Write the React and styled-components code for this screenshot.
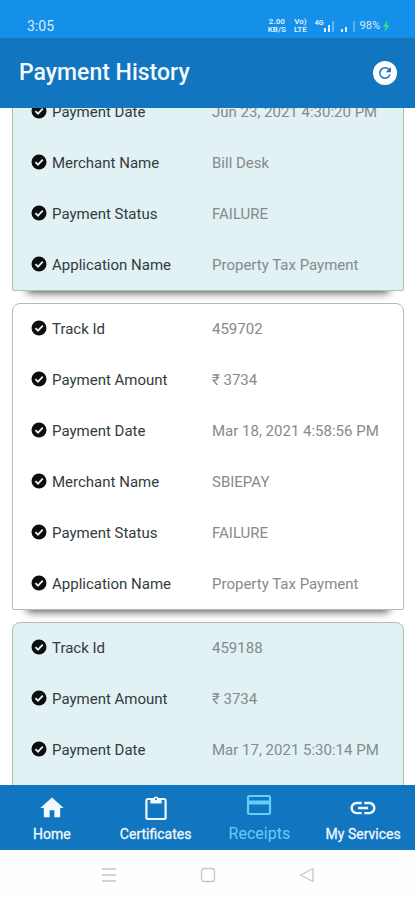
import React, {useLayoutEffect, useRef} from 'react'
import styled, {createGlobalStyle, css} from 'styled-components'
import {MdHome, MdLink} from 'react-icons/md'

const GlobalStyle = createGlobalStyle`
  * {
    box-sizing: border-box;
  }

  body {
    margin: 0;
    background: #fff;
    font-family: Roboto, "Noto Sans", sans-serif;
  }

  button {
    font-family: inherit;
    border: 0;
    padding: 0;
    background: none;
  }
`

const Screen = styled.div`
  display: flex;
  flex-direction: column;
  height: 100vh;
`

const StatusBar = styled.div`
  display: flex;
  align-items: center;
  justify-content: space-between;
  flex: none;
  height: 38px;
  padding: 14px 25px 0 27px;
  background: #1590ea;
  color: #d8edfc;
`

const Time = styled.div`
  font-size: 14px;
  line-height: 20px;
`

const Indicators = styled.div`
  display: flex;
  align-items: center;
`

const Stacked = styled.div`
  display: flex;
  flex-direction: column;
  align-items: center;
  margin-right: 8px;
  font-size: 8px;
  font-weight: 700;
  line-height: 8px;
`

const Network = styled.div`
  display: flex;
  align-items: flex-start;
  margin-right: 4px;
  font-size: 7px;
  font-weight: 700;
  line-height: 8px;
`

const Signal = styled.svg`
  display: block;
  margin-right: 4px;
`

const Battery = styled.div`
  margin-right: 2px;
  font-size: 11px;
  line-height: 20px;
`

const Header = styled.header`
  display: flex;
  align-items: center;
  justify-content: space-between;
  flex: none;
  height: 70px;
  padding: 0 18px 0 19px;
  background: #1176bf;
`

const Title = styled.h1`
  margin: 0;
  color: #f3f9fd;
  font-size: 23px;
  font-weight: 500;
  line-height: 30px;
`

const RefreshButton = styled.button`
  display: flex;
  align-items: center;
  justify-content: center;
  width: 24px;
  height: 24px;
  border-radius: 50%;
  background: #fff;
  color: #1176bf;
`

const PaymentList = styled.main`
  flex: 1;
  min-height: 0;
  padding: 12px 11px 12px 12px;
  overflow-y: auto;
  scrollbar-width: none;
`

const Card = styled.dl`
  display: flex;
  flex-direction: column;
  gap: 31px;
  margin: 0 0 12px;
  padding: 15px 18px;
  border: 1px solid #b3bbbb;
  border-radius: 8px 8px 2px 2px;
  background: ${props => props.$tinted ? '#e1f1f4' : '#fff'};
  box-shadow: 0 17px 8px -15px rgba(0, 0, 0, 0.65);
`

const Row = styled.div`
  display: flex;
  font-size: 15px;
  line-height: 20px;
`

const Label = styled.dt`
  display: flex;
  flex: 0 0 181px;
  gap: 5px;
  color: #333b3d;
`

const Value = styled.dd`
  margin: 0;
  color: #858b8c;
  white-space: nowrap;
`

const CheckIcon = styled.svg`
  flex: none;
  width: 16px;
  height: 18px;
`

const TabBar = styled.nav`
  display: grid;
  grid-template-columns: repeat(4, 1fr);
  flex: none;
  height: 65px;
  background: #1176bf;
`

const Tab = styled.button`
  display: flex;
  flex-direction: column;
  align-items: center;
  justify-content: center;
  gap: 1px;
  color: #f0f8fd;
  font-size: 14px;
  line-height: 20px;
  -webkit-text-stroke: 0.3px currentColor;

  ${props => props.$active && css`
    color: #63cffa;
    font-size: 16px;
    -webkit-text-stroke: 0;
  `}
`

const TabIcon = styled.span`
  display: flex;
  align-items: center;
  justify-content: center;
  height: 32px;
  padding: ${props => props.$active ? '0 0 4px' : '2px 0 0'};
`

const SystemBar = styled.div`
  display: flex;
  align-items: center;
  justify-content: center;
  gap: 83px;
  flex: none;
  height: 50px;
  background: #fefefe;
`

const SystemButton = styled.button`
  display: flex;
  width: 16px;
  height: 16px;
  color: #c6c6c6;
`

const payments = [
  {
    date: 'Jun 23, 2021 4:30:20 PM',
    merchant: 'Bill Desk',
    status: 'FAILURE',
    application: 'Property Tax Payment',
  },
  {
    trackId: '459702',
    amount: '₹ 3734',
    date: 'Mar 18, 2021 4:58:56 PM',
    merchant: 'SBIEPAY',
    status: 'FAILURE',
    application: 'Property Tax Payment',
  },
  {
    trackId: '459188',
    amount: '₹ 3734',
    date: 'Mar 17, 2021 5:30:14 PM',
    merchant: 'SBIEPAY',
    status: 'FAILURE',
    application: 'Property Tax Payment',
  },
]

const fields = [
  ['trackId', 'Track Id'],
  ['amount', 'Payment Amount'],
  ['date', 'Payment Date'],
  ['merchant', 'Merchant Name'],
  ['status', 'Payment Status'],
  ['application', 'Application Name'],
]

const Check = () => (
  <CheckIcon viewBox="0 0 16 18" aria-hidden="true">
    <circle cx="8" cy="9" r="7.5" fill="#0b0d0e" />
    <path d="M4.4 9.2l2.6 2.5 4.8-5" fill="none" stroke="#e9f1f2" strokeWidth="1.8" />
  </CheckIcon>
)

const RefreshIcon = () => (
  <svg width="14" height="14" viewBox="0 0 14 14" fill="none" aria-hidden="true">
    <path d="M11.4 4.2A5.2 5.2 0 1 0 12 8.4" stroke="currentColor" strokeWidth="1.5" />
    <path d="M12.9 1v5.2H7.7z" fill="currentColor" />
  </svg>
)

const ClipboardIcon = () => (
  <svg width="22" height="26" viewBox="0 0 22 26" fill="none" aria-hidden="true">
    <rect x="1.4" y="4" width="19.2" height="20" rx="1.6" stroke="currentColor" strokeWidth="2.2" />
    <path d="M5.4 3.6h2.8a2.9 2.9 0 0 1 5.6 0h2.8V8.6H5.4z" fill="currentColor" />
    <circle cx="11" cy="4.2" r="1" fill="#1176bf" />
  </svg>
)

const CardIcon = () => (
  <svg width="26" height="22" viewBox="0 0 26 22" fill="none" aria-hidden="true">
    <rect x="2" y="2" width="22" height="18" rx="1.6" stroke="currentColor" strokeWidth="2.2" />
    <path d="M2 6.5h22v4H2z" fill="currentColor" />
    <path d="M3.2 4.6h19.6" stroke="#1176bf" strokeWidth="1.4" />
  </svg>
)

const tabs = [
  {name: 'Home', icon: <MdHome size={28} />},
  {name: 'Certificates', icon: <ClipboardIcon />},
  {name: 'Receipts', icon: <CardIcon />, active: true},
  {name: 'My Services', icon: <MdLink size={30} />},
]

const StatusIndicators = () => (
  <Indicators>
    <Stacked>
      <span>2.00</span>
      <span>KB/S</span>
    </Stacked>
    <Stacked>
      <span>Vo)</span>
      <span>LTE</span>
    </Stacked>
    <Network>
      4G
      <svg width="12" height="14" viewBox="0 0 12 14" fill="currentColor" aria-hidden="true">
        <path d="M0 9h2v4H0zM4 6h2v7H4z" />
        <path d="M8 2h2v11H8z" opacity="0.4" />
      </svg>
    </Network>
    <Signal width="16" height="14" viewBox="0 0 16 14" fill="currentColor" aria-hidden="true">
      <path d="M1 10h2v3H1zM5 8h2v5H5z" />
      <path d="M13 2h2v11h-2z" opacity="0.35" />
    </Signal>
    <Battery>98%</Battery>
    <svg width="8" height="14" viewBox="0 0 8 14" aria-hidden="true">
      <path d="M5.5 1L1 8h2.6L2.8 13 7.4 6H4.8z" fill="#2fe08a" />
    </svg>
  </Indicators>
)

const Payment = ({payment, tinted}) => (
  <Card $tinted={tinted}>
    {fields.filter(([key]) => payment[key]).map(([key, label]) => (
      <Row key={key}>
        <Label><Check />{label}</Label>
        <Value>{payment[key]}</Value>
      </Row>
    ))}
  </Card>
)

const App = () => {
  const list = useRef(null)

  // open part way down the first receipt
  useLayoutEffect(() => {
    list.current.scrollTop = 34
  }, [])

  return (
    <Screen>
      <GlobalStyle />
      <StatusBar>
        <Time>3:05</Time>
        <StatusIndicators />
      </StatusBar>
      <Header>
        <Title>Payment History</Title>
        <RefreshButton aria-label="Refresh"><RefreshIcon /></RefreshButton>
      </Header>
      <PaymentList ref={list}>
        {payments.map((payment, i) => (
          <Payment key={payment.date} payment={payment} tinted={i % 2 === 0} />
        ))}
      </PaymentList>
      <TabBar>
        {tabs.map(({name, icon, active}) => (
          <Tab key={name} $active={active}>
            <TabIcon $active={active}>{icon}</TabIcon>
            <span>{name}</span>
          </Tab>
        ))}
      </TabBar>
      <SystemBar>
        <SystemButton aria-label="Recent apps">
          <svg width="16" height="16" viewBox="0 0 16 16" stroke="currentColor" strokeWidth="1.3">
            <path d="M1 2h14M1 8h14M1 14h14" />
          </svg>
        </SystemButton>
        <SystemButton aria-label="Home screen">
          <svg width="16" height="16" viewBox="0 0 16 16" fill="none" stroke="currentColor" strokeWidth="1.3">
            <rect x="1.5" y="1.5" width="13" height="13" rx="2.5" />
          </svg>
        </SystemButton>
        <SystemButton aria-label="Back">
          <svg width="16" height="16" viewBox="0 0 16 16" fill="none" stroke="currentColor" strokeWidth="1.3" strokeLinejoin="round">
            <path d="M14 1.5v13L1.5 8z" />
          </svg>
        </SystemButton>
      </SystemBar>
    </Screen>
  )
}

export default App
